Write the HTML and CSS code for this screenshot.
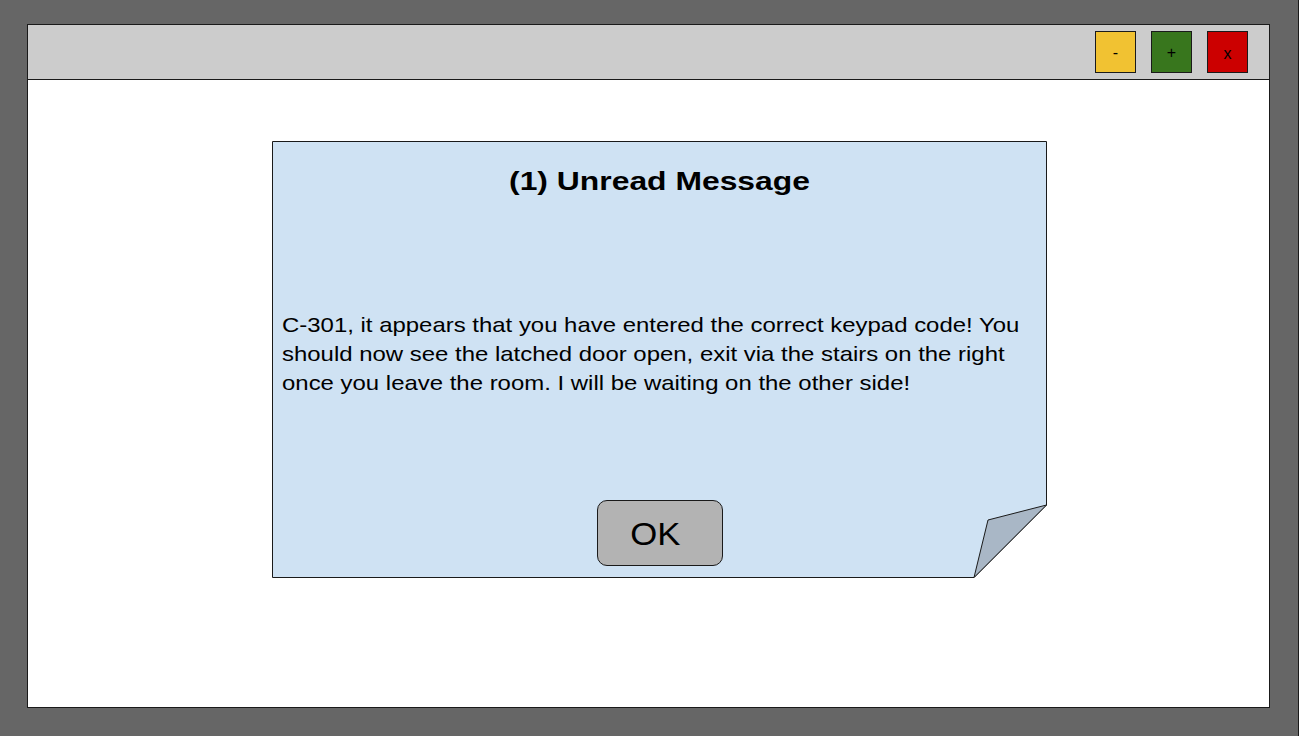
FILE: index.html
```html
<!DOCTYPE html>
<html>
<head>
<meta charset="utf-8">
<link rel="stylesheet" href="styles.css">
</head>
<body>
<div class="window">
  <div class="titlebar">
    <div class="wbtn wbtn-min">-</div>
    <div class="wbtn wbtn-max">+</div>
    <div class="wbtn wbtn-close">x</div>
  </div>
  <div class="content">
    <div class="dialog">
      <svg class="dialog-shape" width="775" height="437" viewBox="0 0 775 437">
        <polygon points="0.5,0.5 774.5,0.5 774.5,364 702,436.5 0.5,436.5" fill="#cfe2f3" stroke="#1a1a1a" stroke-width="1"/>
        <polygon points="774.5,364 716,379 702,436.5" fill="#a9b7c6" stroke="#1a1a1a" stroke-width="1" stroke-linejoin="round"/>
      </svg>
      <h1 class="dialog-title">(1) Unread Message</h1>
      <p class="dialog-text">C-301, it appears that you have entered the correct keypad code! You should now see the latched door open, exit via the stairs on the right once you leave the room. I will be waiting on the other side!</p>
      <button class="ok-btn"><span class="ok-label">OK</span></button>
    </div>
  </div>
</div>
</body>
</html>
```

FILE: styles.css
```css
html, body {
  margin: 0;
  padding: 0;
}
body {
  background: #666666;
  width: 1299px;
  height: 736px;
  overflow: hidden;
  font-family: "Liberation Sans", Arial, sans-serif;
  box-sizing: border-box;
  padding: 24px 0 0 27px;
  border-right: 1px solid #1a1a1a;
}
.window {
  width: 1243px;
  height: 684px;
  box-sizing: border-box;
  border: 1px solid #1a1a1a;
  background: #ffffff;
  display: flex;
  flex-direction: column;
}
.titlebar {
  height: 55px;
  box-sizing: border-box;
  background: #cccccc;
  border-bottom: 1px solid #1a1a1a;
  display: flex;
  justify-content: flex-end;
  align-items: center;
  gap: 15px;
  padding: 0 21px 0 0;
}
.wbtn {
  width: 41px;
  height: 42px;
  box-sizing: border-box;
  border: 1px solid #1a1a1a;
  display: flex;
  align-items: center;
  justify-content: center;
  font-size: 16px;
  color: #000;
  padding-top: 2px;
}
.wbtn-min { background: #f1c232; }
.wbtn-max { background: #38761d; }
.wbtn-close { background: #cc0000; padding-top: 4px; }
.content {
  flex: 1;
  padding: 61px 0 0 244px;
}
.dialog {
  position: relative;
  width: 775px;
  height: 437px;
  box-sizing: border-box;
  display: flex;
  flex-direction: column;
  align-items: center;
}
.dialog-shape {
  position: absolute;
  left: 0;
  top: 0;
}
.dialog-title {
  position: relative;
  margin: 24px 0 0 0;
  font-size: 26px;
  line-height: 32px;
  font-weight: bold;
  color: #000;
  text-align: center;
  width: 100%;
  transform: scaleX(1.225);
  transform-origin: center top;
}
.dialog-text {
  position: relative;
  align-self: flex-start;
  margin: 113px 0 0 10px;
  width: 665px;
  font-size: 21px;
  line-height: 29px;
  color: #000;
  transform: scaleX(1.14);
  transform-origin: left top;
}
.ok-btn {
  position: relative;
  margin-top: auto;
  margin-bottom: 12px;
  width: 126px;
  height: 66px;
  box-sizing: border-box;
  background: #b3b3b3;
  border: 1px solid #1a1a1a;
  border-radius: 10px;
  font-family: "Liberation Sans", Arial, sans-serif;
  color: #000;
  padding: 3px 0 0 0;
  display: flex;
  align-items: center;
  justify-content: center;
}
.ok-label {
  display: block;
  font-size: 31px;
  line-height: 34px;
  transform: scaleX(1.12);
  margin-right: 8px;
}
```
